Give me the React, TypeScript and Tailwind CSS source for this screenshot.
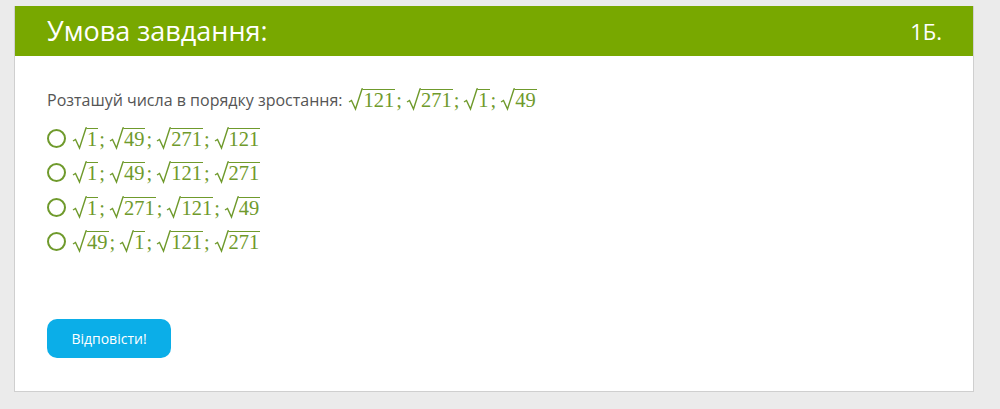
import React from "react";

const question = ["121", "271", "1", "49"];

const options = [
  ["1", "49", "271", "121"],
  ["1", "49", "121", "271"],
  ["1", "271", "121", "49"],
  ["49", "1", "121", "271"],
];

// знак кореня: галочка + риска над числом
function Sqrt({ n }: { n: string }) {
  return (
    <span className="inline-flex items-end">
      <svg width="15" height="23" viewBox="0 0 15 23" className="shrink-0">
        <path
          d="M1 14 L3.5 12.5 L7.5 21 L14 1 L15 1"
          fill="none"
          stroke="#6f9a2c"
          strokeWidth="1.4"
          strokeLinejoin="miter"
        />
      </svg>
      <span className="border-t-[1.4px] border-[#6f9a2c] leading-[21px] pr-[1px] mt-[1px]">
        {n}
      </span>
    </span>
  );
}

function MathList({ items }: { items: string[] }) {
  return (
    <span
      className="inline-flex items-end text-[20.5px] text-[#6f9a2c]"
      style={{ fontFamily: '"Liberation Serif", "DejaVu Serif", serif' }}
    >
      {items.map((n, i) => (
        <span key={i} className="inline-flex items-end">
          <Sqrt n={n} />
          {i < items.length - 1 && <span className="leading-[21px] ml-[1px] mr-[4px]">;</span>}
        </span>
      ))}
    </span>
  );
}

export default function App() {
  return (
    <div
      className="min-h-[409px] bg-[#ebebeb] pt-[6px] pl-[14px] pr-[26px]"
      style={{ fontFamily: '"Open Sans", "Noto Sans", sans-serif' }}
    >
      <div className="w-[960px] bg-white border border-[#cfcfcf] border-t-0">
        <div className="h-[50px] bg-[#78a800] flex items-center justify-between pl-[32px] pr-[31px] text-white">
          <span className="text-[27px]">Умова завдання:</span>
          <span className="text-[22px]">1Б.</span>
        </div>

        <div className="pl-[32px] pt-[31px] pb-[33px]">
          <div className="flex items-end gap-[6px] text-[16px] text-[#555555] h-[24px]">
            <span className="leading-[21px]">Розташуй числа в порядку зростання:</span>
            <MathList items={question} />
          </div>

          <div className="mt-[10px] flex flex-col">
            {options.map((opt, i) => (
              <label key={i} className="flex items-center gap-[6px] h-[34.5px] cursor-pointer">
                <span className="w-[19px] h-[19px] rounded-full border-2 border-[#6f9a2c] shrink-0" />
                <MathList items={opt} />
              </label>
            ))}
          </div>

          <button className="mt-[60px] w-[124px] h-[39px] rounded-[10px] bg-[#0baee8] text-white text-[14px]">
            Відповісти!
          </button>
        </div>
      </div>
    </div>
  );
}
